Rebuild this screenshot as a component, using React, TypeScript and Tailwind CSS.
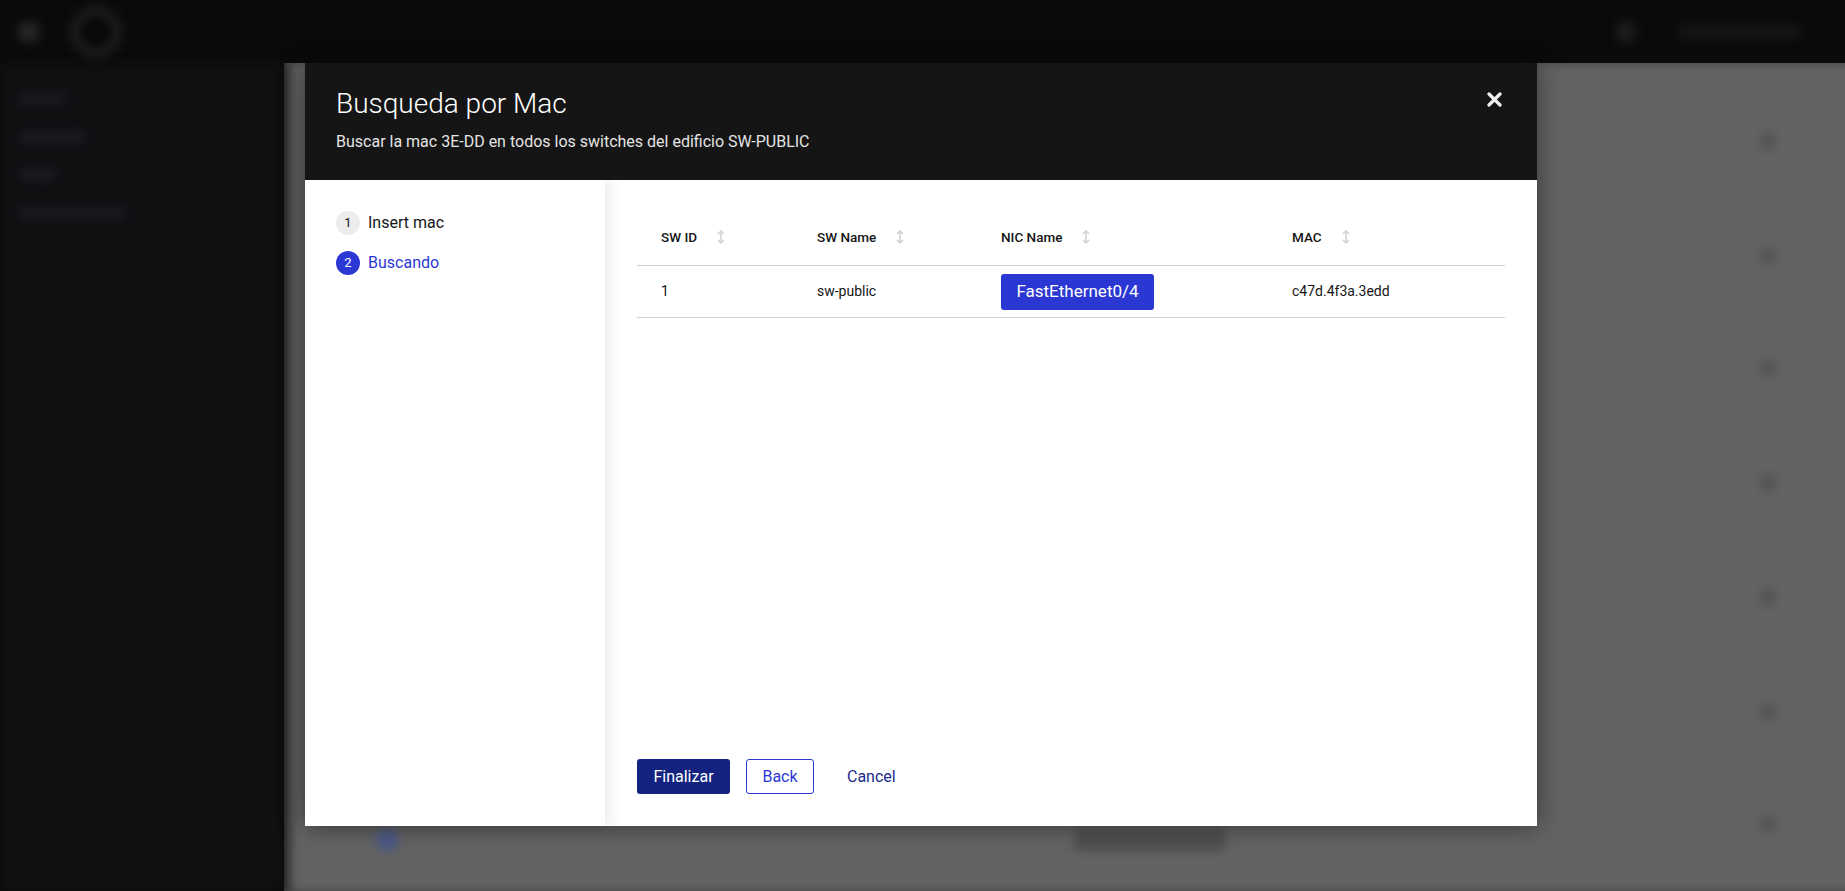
import React from "react";

const SortIcon = () => (
  <svg width="8" height="14" viewBox="0 0 8 14" className="ml-[20px] shrink-0">
    <path d="M4 1.5v11" stroke="#d2d2d2" strokeWidth="1.6" />
    <path d="M1 4L4 1l3 3M1 10l3 3 3-3" fill="none" stroke="#d2d2d2" strokeWidth="1.6" />
  </svg>
);

const CloseIcon = () => (
  <svg width="15" height="15" viewBox="0 0 15 15">
    <path d="M2 2l11 11M13 2L2 13" stroke="#f0f0f0" strokeWidth="3.2" strokeLinecap="round" />
  </svg>
);

const cols = [
  { label: "SW ID", w: "w-[156px]" },
  { label: "SW Name", w: "w-[184px]" },
  { label: "NIC Name", w: "w-[291px]" },
  { label: "MAC", w: "flex-1" },
];

function Backdrop() {
  return (
    <div className="flex h-[891px] w-full flex-col bg-[#0a0a0b]">
      <div className="flex h-[63px] shrink-0 items-center gap-[30px] pl-[18px] pr-[45px] blur-[5px]">
        <div className="h-[22px] w-[22px] rounded-full bg-[#262628]" />
        <div className="h-[52px] w-[52px] rounded-full border-[9px] border-[#1d1d1f]" />
        <div className="flex-1" />
        <div className="h-[22px] w-[22px] rounded-full bg-[#1c1c1e]" />
        <div className="ml-[10px] h-[14px] w-[123px] rounded bg-[#151517]" />
      </div>
      <div className="flex flex-1">
        <div className="flex w-[284px] flex-col gap-[26px] bg-[#0f1012] px-[20px] pt-[30px] blur-[5px]">
          <div className="h-[12px] w-[45px] rounded bg-[#1a1b1e]" />
          <div className="h-[12px] w-[65px] rounded bg-[#1a1b1e]" />
          <div className="h-[12px] w-[35px] rounded bg-[#1a1b1e]" />
          <div className="h-[12px] w-[105px] rounded bg-[#1a1b1e]" />
        </div>
        <div className="flex flex-1 bg-[#636363] shadow-[inset_8px_0_10px_rgba(0,0,0,0.35)]">
          <div className="flex flex-1 flex-col justify-end pb-[40px] blur-[5px]">
            <div className="flex items-center pl-[92px]">
              <div className="h-[22px] w-[22px] rounded-full bg-[#4a5a8a]" />
              <div className="ml-[677px] h-[22px] w-[150px] rounded bg-[#4f4f4f]" />
            </div>
          </div>
          <div className="flex flex-col gap-[96px] pr-[68px] pt-[69px] blur-[4px]">
            {[0, 1, 2, 3, 4, 5, 6].map((i) => (
              <div key={i} className="h-[18px] w-[18px] rounded-full bg-[#555555]" />
            ))}
          </div>
        </div>
      </div>
    </div>
  );
}

export default function App() {
  return (
    <div className="relative h-[891px] w-[1845px] overflow-hidden font-['Roboto','Liberation_Sans',sans-serif]">
      <Backdrop />
      <div className="absolute inset-0 flex items-center justify-center pb-[2px] pr-[3px]">
        <div className="flex h-[763px] w-[1232px] flex-col bg-white shadow-[0_0_24px_rgba(0,0,0,0.45)]">
          <header className="relative h-[117px] shrink-0 bg-[#151515] px-[31px] pt-[23px]">
            <h1 className="text-[28px] font-light leading-[36px] text-white">Busqueda por Mac</h1>
            <p className="mt-[10px] text-[16px] leading-[20px] text-[#e4e4e4]">
              Buscar la mac 3E-DD en todos los switches del edificio SW-PUBLIC
            </p>
            <button className="absolute right-[31px] top-[25px] p-[4px]">
              <CloseIcon />
            </button>
          </header>
          <div className="flex min-h-0 flex-1">
            <nav className="relative z-10 w-[300px] shrink-0 bg-white px-[31px] pt-[31px] shadow-[6px_0_12px_rgba(0,0,0,0.07)]">
              <ol className="flex flex-col gap-[16px]">
                <li className="flex items-center gap-[8px]">
                  <span className="flex h-[24px] w-[24px] items-center justify-center rounded-full bg-[#ececec] text-[13px] text-[#151515]">
                    1
                  </span>
                  <span className="text-[16px] text-[#151515]">Insert mac</span>
                </li>
                <li className="flex items-center gap-[8px]">
                  <span className="flex h-[24px] w-[24px] items-center justify-center rounded-full bg-[#2b38d4] text-[13px] text-white">
                    2
                  </span>
                  <span className="text-[16px] text-[#2b38d4]">Buscando</span>
                </li>
              </ol>
            </nav>
            <section className="flex flex-1 flex-col pl-[32px] pr-[32px] pb-[32px] pt-[29px]">
              <div className="flex-1">
                <div className="flex h-[57px] items-center border-b border-[#d2d2d2] text-[13.5px] font-medium text-[#151515]">
                  {cols.map((c) => (
                    <div key={c.label} className={`${c.w} flex shrink-0 items-center pl-[24px]`}>
                      <span>{c.label}</span>
                      <SortIcon />
                    </div>
                  ))}
                </div>
                <div className="flex h-[52px] items-center border-b border-[#d2d2d2] text-[14px] text-[#151515]">
                  <div className="w-[156px] shrink-0 pl-[24px]">1</div>
                  <div className="w-[184px] shrink-0 pl-[24px]">sw-public</div>
                  <div className="w-[291px] shrink-0 pl-[24px]">
                    <span className="inline-flex h-[36px] w-[153px] items-center justify-center rounded-[3px] bg-[#2b37d3] text-[17px] text-white">
                      FastEthernet0/4
                    </span>
                  </div>
                  <div className="flex-1 pl-[24px]">c47d.4f3a.3edd</div>
                </div>
              </div>
              <div className="flex items-center gap-[16px]">
                <button className="h-[35px] w-[93px] rounded-[3px] bg-[#14237f] text-[16px] text-white">
                  Finalizar
                </button>
                <button className="h-[35px] w-[68px] rounded-[3px] border border-[#2b38d4] text-[16px] text-[#2b38d4]">
                  Back
                </button>
                <button className="ml-[17px] text-[16px] text-[#1a2a8c]">Cancel</button>
              </div>
            </section>
          </div>
        </div>
      </div>
    </div>
  );
}
